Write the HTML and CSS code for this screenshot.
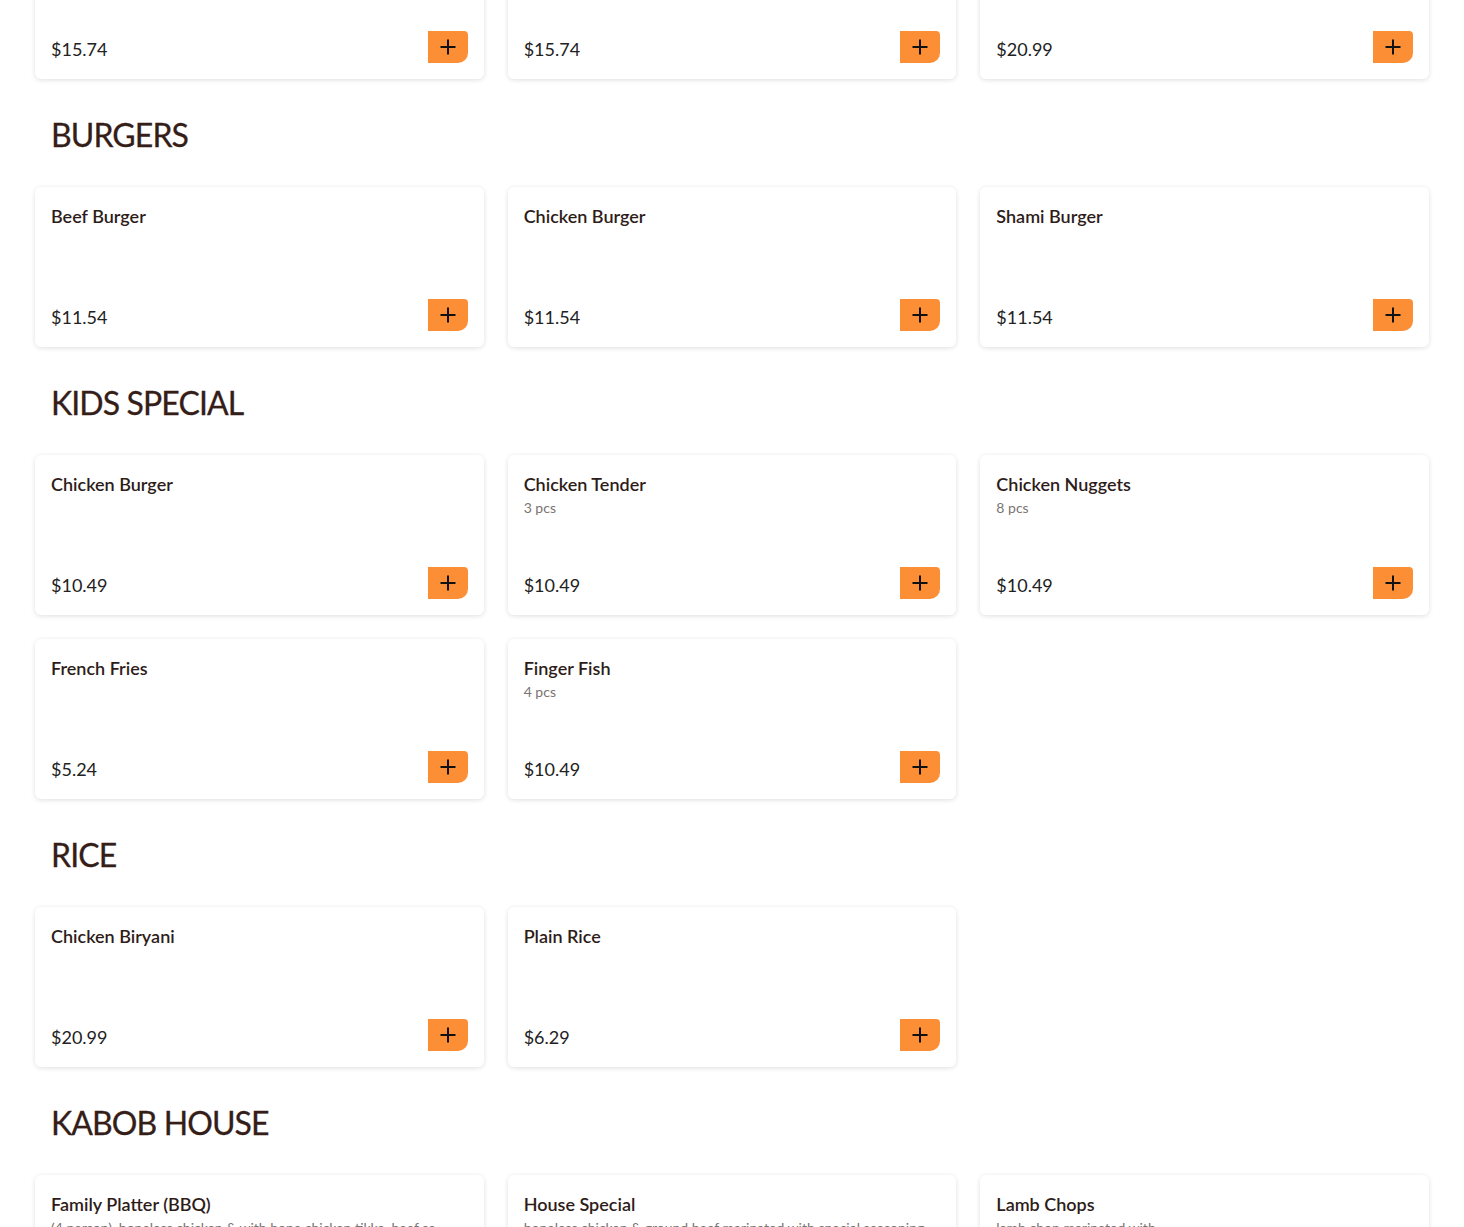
FILE: index.html
```html
<!DOCTYPE html>
<html lang="en">
<head>
<meta charset="utf-8">
<title>Menu</title>
<link rel="stylesheet" href="styles.css">
</head>
<body>
<main class="menu">
  <section class="section section-first">
    <div class="grid">
      <div class="card"><div class="card-info"><div class="name">Chicken Karahi</div></div><div class="card-foot"><span class="price">$15.74</span><button class="add" aria-label="Add"><svg viewBox="0 0 20 20" width="20" height="20"><path d="M10 2.5v15M2.5 10h15" stroke="#111" stroke-width="2" fill="none"/></svg></button></div></div>
      <div class="card"><div class="card-info"><div class="name">Goat Karahi</div></div><div class="card-foot"><span class="price">$15.74</span><button class="add" aria-label="Add"><svg viewBox="0 0 20 20" width="20" height="20"><path d="M10 2.5v15M2.5 10h15" stroke="#111" stroke-width="2" fill="none"/></svg></button></div></div>
      <div class="card"><div class="card-info"><div class="name">Lamb Karahi</div></div><div class="card-foot"><span class="price">$20.99</span><button class="add" aria-label="Add"><svg viewBox="0 0 20 20" width="20" height="20"><path d="M10 2.5v15M2.5 10h15" stroke="#111" stroke-width="2" fill="none"/></svg></button></div></div>
    </div>
  </section>

  <section class="section">
    <h2 class="heading">BURGERS</h2>
    <div class="grid">
      <div class="card"><div class="card-info"><div class="name">Beef Burger</div></div><div class="card-foot"><span class="price">$11.54</span><button class="add" aria-label="Add"><svg viewBox="0 0 20 20" width="20" height="20"><path d="M10 2.5v15M2.5 10h15" stroke="#111" stroke-width="2" fill="none"/></svg></button></div></div>
      <div class="card"><div class="card-info"><div class="name">Chicken Burger</div></div><div class="card-foot"><span class="price">$11.54</span><button class="add" aria-label="Add"><svg viewBox="0 0 20 20" width="20" height="20"><path d="M10 2.5v15M2.5 10h15" stroke="#111" stroke-width="2" fill="none"/></svg></button></div></div>
      <div class="card"><div class="card-info"><div class="name">Shami Burger</div></div><div class="card-foot"><span class="price">$11.54</span><button class="add" aria-label="Add"><svg viewBox="0 0 20 20" width="20" height="20"><path d="M10 2.5v15M2.5 10h15" stroke="#111" stroke-width="2" fill="none"/></svg></button></div></div>
    </div>
  </section>

  <section class="section">
    <h2 class="heading">KIDS SPECIAL</h2>
    <div class="grid">
      <div class="card"><div class="card-info"><div class="name">Chicken Burger</div></div><div class="card-foot"><span class="price">$10.49</span><button class="add" aria-label="Add"><svg viewBox="0 0 20 20" width="20" height="20"><path d="M10 2.5v15M2.5 10h15" stroke="#111" stroke-width="2" fill="none"/></svg></button></div></div>
      <div class="card"><div class="card-info"><div class="name">Chicken Tender</div><div class="desc">3 pcs</div></div><div class="card-foot"><span class="price">$10.49</span><button class="add" aria-label="Add"><svg viewBox="0 0 20 20" width="20" height="20"><path d="M10 2.5v15M2.5 10h15" stroke="#111" stroke-width="2" fill="none"/></svg></button></div></div>
      <div class="card"><div class="card-info"><div class="name">Chicken Nuggets</div><div class="desc">8 pcs</div></div><div class="card-foot"><span class="price">$10.49</span><button class="add" aria-label="Add"><svg viewBox="0 0 20 20" width="20" height="20"><path d="M10 2.5v15M2.5 10h15" stroke="#111" stroke-width="2" fill="none"/></svg></button></div></div>
      <div class="card"><div class="card-info"><div class="name">French Fries</div></div><div class="card-foot"><span class="price">$5.24</span><button class="add" aria-label="Add"><svg viewBox="0 0 20 20" width="20" height="20"><path d="M10 2.5v15M2.5 10h15" stroke="#111" stroke-width="2" fill="none"/></svg></button></div></div>
      <div class="card"><div class="card-info"><div class="name">Finger Fish</div><div class="desc">4 pcs</div></div><div class="card-foot"><span class="price">$10.49</span><button class="add" aria-label="Add"><svg viewBox="0 0 20 20" width="20" height="20"><path d="M10 2.5v15M2.5 10h15" stroke="#111" stroke-width="2" fill="none"/></svg></button></div></div>
    </div>
  </section>

  <section class="section">
    <h2 class="heading">RICE</h2>
    <div class="grid">
      <div class="card"><div class="card-info"><div class="name">Chicken Biryani</div></div><div class="card-foot"><span class="price">$20.99</span><button class="add" aria-label="Add"><svg viewBox="0 0 20 20" width="20" height="20"><path d="M10 2.5v15M2.5 10h15" stroke="#111" stroke-width="2" fill="none"/></svg></button></div></div>
      <div class="card"><div class="card-info"><div class="name">Plain Rice</div></div><div class="card-foot"><span class="price">$6.29</span><button class="add" aria-label="Add"><svg viewBox="0 0 20 20" width="20" height="20"><path d="M10 2.5v15M2.5 10h15" stroke="#111" stroke-width="2" fill="none"/></svg></button></div></div>
    </div>
  </section>

  <section class="section">
    <h2 class="heading">KABOB HOUSE</h2>
    <div class="grid">
      <div class="card"><div class="card-info"><div class="name">Family Platter (BBQ)</div><div class="desc">(4 person), boneless chicken &amp; with bone chicken tikka, beef se...</div></div><div class="card-foot"><span class="price">$59.99</span><button class="add" aria-label="Add"><svg viewBox="0 0 20 20" width="20" height="20"><path d="M10 2.5v15M2.5 10h15" stroke="#111" stroke-width="2" fill="none"/></svg></button></div></div>
      <div class="card"><div class="card-info"><div class="name">House Special</div><div class="desc">boneless chicken &amp; ground beef marinated with special seasoning</div></div><div class="card-foot"><span class="price">$20.99</span><button class="add" aria-label="Add"><svg viewBox="0 0 20 20" width="20" height="20"><path d="M10 2.5v15M2.5 10h15" stroke="#111" stroke-width="2" fill="none"/></svg></button></div></div>
      <div class="card"><div class="card-info"><div class="name">Lamb Chops</div><div class="desc">lamb chop marinated with</div></div><div class="card-foot"><span class="price">$24.99</span><button class="add" aria-label="Add"><svg viewBox="0 0 20 20" width="20" height="20"><path d="M10 2.5v15M2.5 10h15" stroke="#111" stroke-width="2" fill="none"/></svg></button></div></div>
    </div>
  </section>
</main>
</body>
</html>
```

FILE: styles.css
```css
html {
  overflow: hidden;
}
body {
  margin: 0;
  background: #ffffff;
  font-family: Lato, "Noto Sans", "Liberation Sans", sans-serif;
  color: #2a1a17;
}
.menu {
  margin: -81px 35px 0 35px;
}
.section {
  padding-top: 36px;
}
.section-first {
  padding-top: 0;
}
.heading {
  margin: 0 0 32px 16px;
  font-size: 32px;
  line-height: 40px;
  font-weight: 400;
  color: #351d18;
  letter-spacing: -0.9px;
  -webkit-text-stroke: 0.3px #351d18;
}
.grid {
  display: grid;
  grid-template-columns: repeat(3, 1fr);
  gap: 24px;
}
.card {
  height: 160px;
  box-sizing: border-box;
  padding: 16px;
  background: #fff;
  border-radius: 6px;
  box-shadow: 0 1px 5px rgba(0, 0, 0, 0.13);
  display: flex;
  flex-direction: column;
  justify-content: space-between;
}
.name {
  font-size: 18px;
  line-height: 27px;
  font-weight: 600;
  color: #2e1c19;
}
.desc {
  font-size: 14px;
  line-height: 20px;
  color: #7a7472;
}
.card-foot {
  display: flex;
  align-items: center;
  justify-content: space-between;
  height: 32px;
}
.price {
  font-size: 18px;
  color: #222;
  padding-top: 3px;
}
.add {
  width: 40px;
  height: 32px;
  border: 0;
  padding: 0;
  background: #fc8f36;
  border-radius: 0 4px 10px 0;
  display: flex;
  align-items: center;
  justify-content: center;
  cursor: pointer;
}
```
